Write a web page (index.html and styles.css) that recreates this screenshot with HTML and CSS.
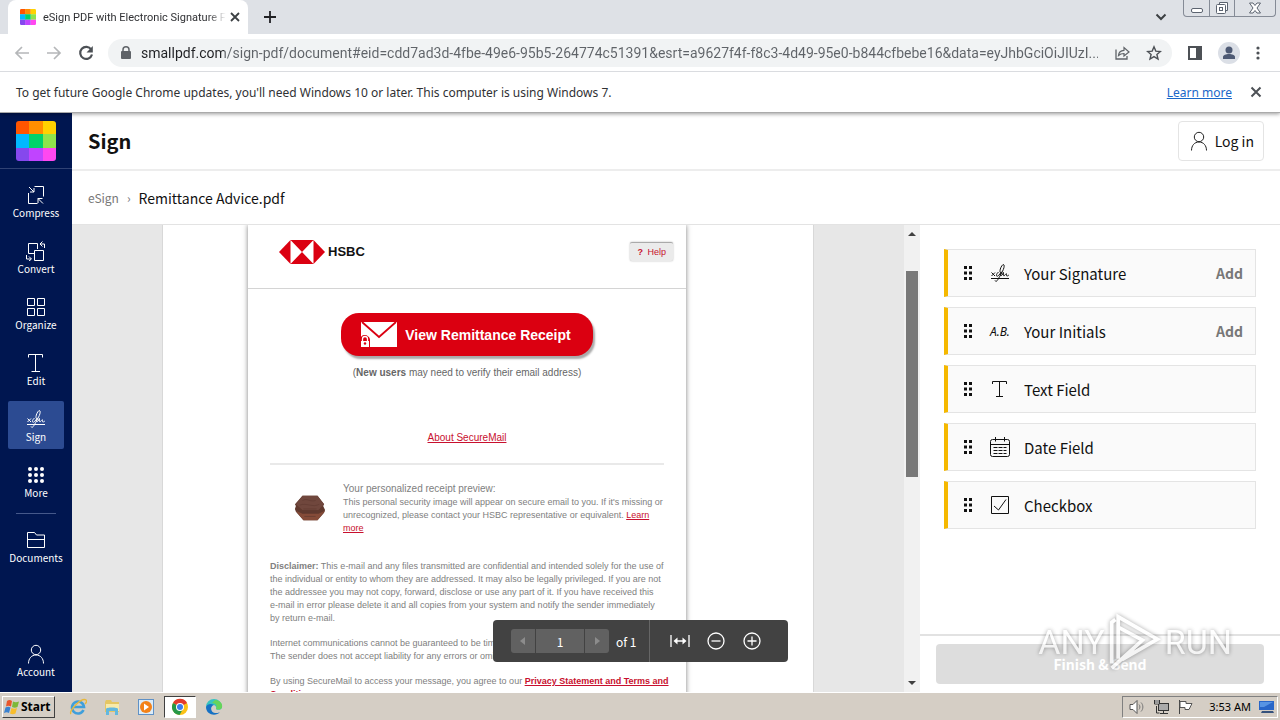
FILE: index.html
```html
<!DOCTYPE html>
<html lang="en">
<head>
  <meta charset="UTF-8" />
  <meta name="viewport" content="width=device-width, initial-scale=1" />
  <title>eSign PDF with Electronic Signature</title>
  <link rel="stylesheet" href="styles.css">
</head>
<body>
  <header class="browser">
    <div class="tab-strip">
      <div class="tab">
        <svg class="favicon" width="16" height="16" viewBox="0 0 40 40"><use href="#logo" /></svg>
        <span class="tab-title">eSign PDF with Electronic Signature F</span>
        <button class="icon-btn" aria-label="Close tab"><svg width="10" height="10" viewBox="0 0 10 10"><path d="M1 1l8 8M9 1L1 9" stroke="#3c4043" stroke-width="1.8" /></svg></button>
      </div>
      <button class="icon-btn new-tab" aria-label="New tab"><svg width="12" height="12" viewBox="0 0 12 12"><path d="M6 0v12M0 6h12" stroke="#202124" stroke-width="1.8" /></svg></button>
      <button class="icon-btn tab-search" aria-label="Search tabs"><svg width="12" height="8" viewBox="0 0 12 8"><path d="M1.5 1.5L6 6l4.500-4.500" fill="none" stroke="#3c4043" stroke-width="2" /></svg></button>
      <div class="window-controls">
        <button aria-label="Minimize"><svg width="14" height="16" viewBox="0 0 14 16"><rect x="1.500" y="8.500" width="11" height="4" rx="1.500" fill="#fff" stroke="#5c6470" /></svg></button>
        <button aria-label="Restore"><svg width="14" height="16" viewBox="0 0 14 16"><path d="M4.500 4V2.500h8v8H11" fill="#fff" stroke="#5c6470" /><rect x="1.500" y="4.500" width="9" height="9" rx="1" fill="#fff" stroke="#5c6470" /><rect x="4.500" y="7.500" width="3" height="3" fill="none" stroke="#5c6470" /></svg></button>
        <button class="wide" aria-label="Close"><svg width="14" height="16" viewBox="0 0 14 16"><path d="M1.500 3h3.500l2 2.500L9 3h3.500L9 8l3.500 5H9L7 10.500 5 13H1.500L5 8z" fill="#fff" stroke="#5c6470" /></svg></button>
      </div>
    </div>

    <div class="toolbar">
      <button class="icon-btn" aria-label="Back"><svg width="16" height="16" viewBox="0 0 16 16"><path d="M15 8H2M8 2L2 8l6 6" fill="none" stroke="#b5b7b9" stroke-width="1.700" /></svg></button>
      <button class="icon-btn" aria-label="Forward"><svg width="16" height="16" viewBox="0 0 16 16"><path d="M1 8h13M8 2l6 6-6 6" fill="none" stroke="#b5b7b9" stroke-width="1.700" /></svg></button>
      <button class="icon-btn" aria-label="Reload"><svg width="16" height="16" viewBox="0 0 16 16"><path d="M13.200 4.500A6 6 0 1 0 14 9.500" fill="none" stroke="#4d5156" stroke-width="2.200" /><path d="M14.800 1v6.500H8.500z" fill="#4d5156" /></svg></button>
      <div class="omnibox">
        <svg width="12" height="14" viewBox="0 0 12 14"><rect x="1" y="5" width="10" height="8" rx="1" fill="#5f6368" /><path d="M3 6V3.800a3 3 0 0 1 6 0V6" fill="none" stroke="#5f6368" stroke-width="1.500" /></svg>
        <input class="url" type="text" aria-label="Address" value="smallpdf.com/sign-pdf/document#eid=cdd7ad3d-4fbe-49e6-95b5-264774c51391&amp;esrt=a9627f4f-f8c3-4d49-95e0-b844cfbebe16&amp;data=eyJhbGciOiJIUzI..." />
        <button class="icon-btn" aria-label="Share"><svg width="16" height="16" viewBox="0 0 16 16"><path d="M2 4.500v9.500h11v-3" fill="none" stroke="#5f6368" stroke-width="1.300" /><path d="M4.500 10.500c.3-3.500 2-5 5.500-5.200V2.500L15 7l-5 4V8.500c-2.600 0-4 .5-5.500 2z" fill="none" stroke="#5f6368" stroke-width="1.200" /></svg></button>
        <button class="icon-btn" aria-label="Bookmark"><svg width="16" height="16" viewBox="0 0 16 16"><path d="M8 1.800l1.800 4.300 4.600.4-3.500 3 1.100 4.500L8 11.600 4 14l1.100-4.500-3.500-3 4.600-.4z" fill="none" stroke="#4d5156" stroke-width="1.400" /></svg></button>
      </div>
      <button class="icon-btn" aria-label="Side panel"><svg width="14" height="14" viewBox="0 0 14 14"><path d="M0 0h14v14H0zM2 2v10h6V2z" fill="#4d5156" fill-rule="evenodd" /></svg></button>
      <button class="icon-btn" aria-label="Profile"><svg width="22" height="22" viewBox="0 0 22 22"><circle cx="11" cy="11" r="11" fill="#dbdfe6" /><circle cx="11" cy="8" r="3.500" fill="#4e5a74" /><path d="M5 17v-2c0-2 3-3 6-3s6 1 6 3v2z" fill="#4e5a74" /></svg></button>
      <button class="icon-btn" aria-label="Menu"><svg width="4" height="14" viewBox="0 0 4 14" fill="#4d5156"><circle cx="2" cy="2" r="1.600" /><circle cx="2" cy="7" r="1.600" /><circle cx="2" cy="12" r="1.600" /></svg></button>
    </div>

    <div class="infobar">
      <span>To get future Google Chrome updates, you'll need Windows 10 or later. This computer is using Windows 7.</span>
      <a href="#">Learn more</a>
      <button class="icon-btn" aria-label="Dismiss"><svg width="12" height="12" viewBox="0 0 12 12"><path d="M1.500 1.500l9 9M10.500 1.500l-9 9" stroke="#4d5156" stroke-width="2" /></svg></button>
    </div>
  </header>

  <div class="app">
    <nav class="sidebar">
      <a class="logo" href="#" aria-label="Home">
        <svg width="40" height="40" viewBox="0 0 40 40">
          <clipPath id="round"><rect width="40" height="40" rx="3" /></clipPath>
          <g id="logo" clip-path="url(#round)">
            <path d="M0 0h14v14H0z" fill="#ff5500" /><path d="M13 0h14v14H13z" fill="#ff8e00" /><path d="M27 0h13v14H27z" fill="#ffd200" />
            <path d="M0 13h14v14H0z" fill="#00b8ff" /><path d="M13 13h14v14H13z" fill="#00d26a" /><path d="M27 13h13v14H27z" fill="#8fe44b" />
            <path d="M0 27h14v13H0z" fill="#8548ed" /><path d="M13 27h14v13H13z" fill="#c044ff" /><path d="M27 27h13v13H27z" fill="#ff48f0" />
          </g>
        </svg>
      </a>
      <a class="nav-item" href="#"><svg width="20" height="20" viewBox="0 0 20 20"><path d="M8.500 1.500h9v10M2.500 8v10.500h9M3 2l5 5M8 3v4H4M17 18.500l-5-5M12 18v-4.500h4.500" /></svg>Compress</a>
      <a class="nav-item" href="#"><svg width="20" height="20" viewBox="0 0 20 20"><path d="M8 12.500H2.500v-10h9V8M8.500 9.500h9v10h-9zM14 3h4.500v4M16.500.5L14 3l2.500 2.500M.5 14v4H5M3 15.500L5.500 18 3 20" /></svg>Convert</a>
      <a class="nav-item" href="#"><svg width="20" height="20" viewBox="0 0 20 20"><path d="M1.500 1.500h7v7h-7zM11.500 1.500h7v7h-7zM1.500 11.500h7v7h-7zM11.500 11.500h7v7h-7z" /></svg>Organize</a>
      <a class="nav-item" href="#"><svg width="20" height="20" viewBox="0 0 20 20"><path d="M2.500 4.500v-3h14v3M9.500 1.500v17M5.500 18.500h8.500" /></svg>Edit</a>
      <a class="nav-item active" href="#"><svg width="20" height="20" viewBox="0 0 20 20"><g id="scribble"><path d="M1 15.500h18M1.500 9.500l3.500 3.500M5 9.500L1.500 13M5 17.500c1 2 2.500 0 3.500-2C11 11 15 5 14 2c-.8-1.800-3.500 2-4 5.500-.3 2.200.7 2.500 2 1.500M8.500 9c-3.500 3-2 6 .5 3l2-2.500c-1.500 4 .5 4.500 2.500 0-.5 3.500.3 4 1.500 2.500s1.500-2 1.500 0 1.500.5 2.500 0" /></g></svg>Sign</a>
      <a class="nav-item" href="#"><svg class="dots" width="20" height="20" viewBox="0 0 20 20"><circle cx="4" cy="4" r="2" /><circle cx="10" cy="4" r="2" /><circle cx="16" cy="4" r="2" /><circle cx="4" cy="10" r="2" /><circle cx="10" cy="10" r="2" /><circle cx="16" cy="10" r="2" /><circle cx="4" cy="16" r="2" /><circle cx="10" cy="16" r="2" /><circle cx="16" cy="16" r="2" /></svg>More</a>
      <hr class="nav-line" />
      <a class="nav-item" href="#"><svg width="20" height="20" viewBox="0 0 20 20"><path d="M1.500 17.500v-15h7l2 2.500h8v12.500zM1.500 9.500h17" /></svg>Documents</a>
      <a class="nav-item account" href="#"><svg width="20" height="20" viewBox="0 0 20 20"><circle cx="10" cy="6" r="4.700" /><path d="M2.500 19.500c0-5 3-8.500 7.500-8.500s7.500 3.500 7.500 8.500" /></svg>Account</a>
    </nav>

    <main class="main">
      <div class="top">
        <h1>Sign</h1>
        <button class="login"><svg width="20" height="20" viewBox="0 0 20 20"><circle cx="10" cy="6" r="4.700" /><path d="M2.500 19.500c0-5 3-8.500 7.500-8.500s7.500 3.500 7.500 8.500" /></svg>Log in</button>
      </div>
      <div class="crumbs"><a href="#">eSign</a><span class="sep">›</span><span>Remittance Advice.pdf</span></div>

      <div class="workspace">
        <section class="viewer">
          <div class="page">
            <article class="mail">
              <div class="mail-head">
                <svg width="46" height="24" viewBox="0 0 46 24"><path d="M11.500 0h23L46 12 34.500 24h-23L0 12z" fill="#db0011" /><path d="M11.500 0L23 12 11.500 24zM34.500 0v24L23 12z" fill="#fff" /></svg>
                <strong>HSBC</strong>
                <button class="help"><b>?</b> Help</button>
              </div>
              <div class="mail-body">
                <button class="receipt">
                  <svg width="37" height="27" viewBox="0 0 37 27"><rect x="1" y="1" width="36" height="25" fill="#fff" /><path d="M2 1l17 15L36 1" fill="none" stroke="#db0011" stroke-width="1.800" /><path d="M0 27V19c0-3 2-5 4.500-5S10 16 10 19v8z" fill="#db0011" /><path d="M1 26v-6h8v6z" fill="#fff" /><path d="M2.500 20v-2a2.500 2.500 0 0 1 5 0v2" fill="none" stroke="#fff" stroke-width="1.300" /><circle cx="5" cy="22.500" r="1.200" fill="#db0011" /></svg>
                  View Remittance Receipt
                </button>
                <p class="note">(<b>New users</b> may need to verify their email address)</p>
                <p class="about"><a href="#">About SecureMail</a></p>
                <div class="preview">
                  <svg width="32" height="28" viewBox="0 0 34 28"><path d="M9 1h16l7 9-1 2 2 4-1 3-7 8H10l-8-9-1-3 1-3-1-2z" fill="#60392e" /><path d="M9 1h16l7 9-6 6H9l-7-6z" fill="#70473d" /><path d="M2 17l7 3h17l7-3-8 10H10z" fill="#854b38" /><path d="M9 6c5-3 8 2 14 0M6 11c7-3 14 3 21-1M10 15h14M9 19l15-1M11 23h12" fill="none" stroke="#5c382f" stroke-width=".6" /></svg>
                  <div class="small">
                    <h2>Your personalized receipt preview:</h2>
                    <p>This personal security image will appear on secure email to you. If it's missing or<br>unrecognized, please contact your HSBC representative or equivalent. <a href="#">Learn<br>more</a></p>
                  </div>
                </div>
                <div class="small legal">
                  <p><b>Disclaimer:</b> This e-mail and any files transmitted are confidential and intended solely for the use of<br>the individual or entity to whom they are addressed. It may also be legally privileged. If you are not<br>the addressee you may not copy, forward, disclose or use any part of it. If you have received this<br>e-mail in error please delete it and all copies from your system and notify the sender immediately<br>by return e-mail.</p>
                  <p>Internet communications cannot be guaranteed to be timely,<br>The sender does not accept liability for any errors or omissions.</p>
                  <p>By using SecureMail to access your message, you agree to our <a class="terms" href="#">Privacy Statement and Terms and<br>Conditions</a></p>
                </div>
              </div>
            </article>
          </div>
          <div class="scrollbar">
            <svg width="8" height="4" viewBox="0 0 8 4"><path d="M0 4l4-4 4 4z" fill="#404040" /></svg>
            <div class="thumb"></div>
            <svg width="8" height="4" viewBox="0 0 8 4"><path d="M0 0h8L4 4z" fill="#404040" /></svg>
          </div>
          <div class="pager">
            <div class="pager-nav">
              <button aria-label="Previous page"><svg width="6" height="8" viewBox="0 0 6 8"><path d="M5 0v8L0 4z" fill="#8c8c8c" /></svg></button>
              <input type="text" aria-label="Page" value="1" />
              <button aria-label="Next page"><svg width="6" height="8" viewBox="0 0 6 8"><path d="M1 0l5 4-5 4z" fill="#8c8c8c" /></svg></button>
            </div>
            <span class="total">of 1</span>
            <div class="zoom">
              <button aria-label="Fit width"><svg width="20" height="20" viewBox="0 0 20 20"><path d="M1 4v12M19 4v12M5 10h10" /><path d="M3.500 10l4-3.500v7zM16.500 10l-4-3.500v7z" fill="#fff" stroke="none" /></svg></button>
              <button aria-label="Zoom out"><svg width="20" height="20" viewBox="0 0 20 20"><circle cx="10" cy="10" r="8" /><path d="M5.500 10h9" /></svg></button>
              <button aria-label="Zoom in"><svg width="20" height="20" viewBox="0 0 20 20"><circle cx="10" cy="10" r="8" /><path d="M5.500 10h9M10 5.500v9" /></svg></button>
            </div>
          </div>
        </section>

        <aside class="panel">
          <div class="fields">
            <div class="field">
              <svg class="grip" width="10" height="14" viewBox="0 0 10 14"><path id="grip" d="M1 0h3v3H1zM6 0h3v3H6zM1 5.500h3v3H1zM6 5.500h3v3H6zM1 11h3v3H1zM6 11h3v3H6z" /></svg>
              <svg width="20" height="20" viewBox="0 0 20 20"><use href="#scribble" /></svg>
              <span>Your Signature</span><button>Add</button>
            </div>
            <div class="field">
              <svg class="grip" width="10" height="14" viewBox="0 0 10 14"><use href="#grip" /></svg>
              <span class="initials" aria-hidden="true">A.B.</span>
              <span>Your Initials</span><button>Add</button>
            </div>
            <div class="field">
              <svg class="grip" width="10" height="14" viewBox="0 0 10 14"><use href="#grip" /></svg>
              <svg width="20" height="20" viewBox="0 0 20 20"><path d="M2.500 5V2.500h14V5M9.500 2.500v15M6 17.500h7" /></svg>
              <span>Text Field</span>
            </div>
            <div class="field">
              <svg class="grip" width="10" height="14" viewBox="0 0 10 14"><use href="#grip" /></svg>
              <svg width="20" height="20" viewBox="0 0 20 20"><rect x=".5" y="2.500" width="19" height="17" rx="2" /><path d="M.5 7.500h19M5.500 0v4.500M14.500 0v4.500" /><path d="M3.500 10.500h13M3.500 13.500h13M3.500 16.500h13" stroke-dasharray="4 1" /></svg>
              <span>Date Field</span>
            </div>
            <div class="field">
              <svg class="grip" width="10" height="14" viewBox="0 0 10 14"><use href="#grip" /></svg>
              <svg width="20" height="20" viewBox="0 0 20 20"><path d="M1.500 1.500h17v17h-17zM4 11l4.500 4L16 4.500" /></svg>
              <span>Checkbox</span>
            </div>
          </div>
          <div class="finish">
            <button>Finish &amp; Send</button>
            <div class="watermark">
              <span>ANY</span>
              <svg width="56" height="64" viewBox="0 0 60 64"><path d="M12 50V5l42 24-38 22M5 55V11l4-3M12 16l26 14L5 60" fill="none" stroke="#fff" stroke-width="4" /></svg>
              <span>RUN</span>
            </div>
          </div>
        </aside>
      </div>
    </main>
  </div>

  <footer class="taskbar">
    <button class="start"><svg width="16" height="16" viewBox="0 0 16 16"><path d="M3 2c2-1.500 3.500-1 5 0L7 7.500c-2-1-3.500-1-5 0z" fill="#e9562c" /><path d="M9 2.500c2 1 3.500 1 6 0l-1.500 5.500c-2 1-3.500.8-5.500 0z" fill="#7db83a" /><path d="M1.500 8.500c2-1 3.500-1 5 0L5 14c-1.500-1-3-1-5 0z" fill="#3b82d0" /><path d="M7.500 9c2 1 3.500 1 5.500 0l-1.500 5.500c-2 1-3.500 1-5.500 0z" fill="#f8bd2c" /></svg>Start</button>
    <button class="task" aria-label="Internet Explorer"><svg width="18" height="18" viewBox="0 0 18 18"><path d="M14.500 12a6 6 0 1 1 .5-3H5" fill="none" stroke="#3f9fdb" stroke-width="2.600" /><path d="M2 16C-1 13 13-1 17 2c1 1 0 3-1 4" fill="none" stroke="#e8b83a" stroke-width="1.400" /></svg></button>
    <button class="task" aria-label="Explorer"><svg width="18" height="18" viewBox="0 0 18 18"><path d="M2 4l1-2h5l1 2h7v10H2z" fill="#e5c664" /><path d="M3 6h13v7H3z" fill="#f8eaaa" /><path d="M3 17v-6c0-2 12-2 12 0v6h-3v-4H6v4z" fill="#63b8df" /></svg></button>
    <button class="task" aria-label="Media Player"><svg width="18" height="18" viewBox="0 0 18 18"><rect x="1.500" y="1.500" width="15" height="15" fill="#dcecf8" stroke="#5f91c6" /><circle cx="9" cy="9" r="6" fill="#f38218" /><path d="M7 5.500l5 3.500-5 3.500z" fill="#fff" /></svg></button>
    <button class="task current" aria-label="Chrome"><svg width="18" height="18" viewBox="0 0 18 18"><circle cx="9" cy="9" r="8" fill="#fbc116" /><path d="M9 9L2 5a8 8 0 0 1 14 0z" fill="#e33b2e" /><path d="M9 9L2 5a8 8 0 0 0 6.500 12L12 11z" fill="#269847" /><circle cx="9" cy="9" r="4" fill="#fff" /><circle cx="9" cy="9" r="3" fill="#3b7ded" /></svg></button>
    <button class="task" aria-label="Edge"><svg width="18" height="18" viewBox="0 0 18 18"><path d="M1 9a8 8 0 0 1 16 0c0 3-5 3.500-6 2 1-2-1-4-3-4S4 8 1 9z" fill="#37c3c0" /><path d="M10 2c5 0 8 4 7 7.500-1 2.500-5 2.500-6 1.500 1-2 1-6-4-6z" fill="#66d45a" /><path d="M1 9c1-3 5-4 8-2-4 1-4 7 1 8 3 .5 5-1 5-1-4 5-14 3-14-5z" fill="#1671c4" /></svg></button>
    <div class="tray">
      <svg width="16" height="16" viewBox="0 0 16 16"><path d="M1 5.500h3l4-4v13l-4-4H1z" fill="#fff" stroke="#555" /><path d="M10 5.500c1.200 1.500 1.200 3.500 0 5M12 3.500c2.500 2.500 2.500 6.500 0 9" fill="none" stroke="#777" /></svg>
      <svg width="16" height="16" viewBox="0 0 16 16"><rect x="5.500" y="4.500" width="10" height="7" fill="#aaa" stroke="#333" /><path d="M7 14.500h8M10.500 12v2M3.500 7v7h3" fill="none" stroke="#333" /><path d="M1.500 1v4h5V1M3 1v3M5 1v3" fill="#fff" stroke="#333" /></svg>
      <svg width="16" height="16" viewBox="0 0 16 16"><path d="M2.500 1v14" stroke="#444" /><path d="M3 2.500h6v2h6l-3 6H8v-2H3z" fill="#fff" stroke="#555" /></svg>
      <time>3:53 AM</time>
      <svg width="16" height="16" viewBox="0 0 16 16"><path d="M0 2h15v9H0z" fill="#2866c8" /><path d="M1 3h13L5 8H1z" fill="#5794e3" /><path d="M3 12h11l1 2H2z" fill="#35517c" /></svg>
    </div>
  </footer>
</body>
</html>
```
FILE: styles.css
```css
* { margin: 0; padding: 0; box-sizing: border-box; }
body {
  height: 100vh;
  display: flex;
  flex-direction: column;
  overflow: hidden;
  background: #fff;
  color: #111;
  font-family: "Noto Sans CJK SC", "Noto Sans", sans-serif;
}
button, input { font: inherit; color: inherit; border: none; background: none; }
button { cursor: pointer; }
svg { display: block; flex: none; }

/* browser window */
.browser {
  position: relative;
  z-index: 2;
  font-family: "Noto Sans", sans-serif;
  color: #303134;
  border-bottom: 1px solid #aaa;
  box-shadow: 0 1px 4px rgba(0, 0, 0, 0.4);
}
.icon-btn { display: flex; align-items: center; justify-content: center; }
.tab-strip {
  display: flex;
  align-items: center;
  height: 34px;
  padding-left: 8px;
  background: #dee1e6;
}
.tab {
  display: flex;
  align-items: center;
  width: 240px;
  height: 34px;
  padding: 0 11px 0 12px;
  background: #fff;
  border-radius: 8px 8px 0 0;
}
.tab-title {
  flex: 1;
  margin: 0 4px 0 7px;
  font-family: Roboto, sans-serif;
  font-size: 11px;
  white-space: nowrap;
  mask-image: linear-gradient(to right, #000 90%, transparent);
}
.new-tab { margin-left: 16px; }
.tab-search { margin-left: auto; }
.window-controls {
  display: flex;
  align-self: flex-start;
  margin: 0 4px 0 16px;
  border: 1px solid #858b96;
  border-top: none;
  border-radius: 0 0 4px 4px;
}
.window-controls button {
  display: flex;
  justify-content: center;
  width: 25px;
  height: 16px;
}
.window-controls button + button { border-left: 1px solid #858b96; }
.window-controls .wide { width: 41px; }
.toolbar {
  display: flex;
  align-items: center;
  gap: 16px;
  height: 38px;
  padding: 0 20px 0 14px;
  border-bottom: 1px solid #dadce0;
}
.omnibox {
  flex: 1;
  display: flex;
  align-items: center;
  gap: 16px;
  height: 28px;
  margin-left: -2px;
  padding: 0 10px 0 12px;
  border-radius: 14px;
  background: #f1f3f4;
}
.url {
  flex: 1;
  min-width: 0;
  margin-left: -7px;
  font-family: Roboto, sans-serif;
  font-size: 14px;
  background: linear-gradient(to right, #202124 83px, #5f6368 83px);
  background-clip: text;
  color: transparent;
}
.infobar {
  display: flex;
  align-items: center;
  gap: 18px;
  height: 40px;
  padding: 0 18px 0 16px;
  font-size: 12px;
}
.infobar a { margin-left: auto; color: #1a67c9; }

/* application */
.app { flex: 1; display: flex; min-height: 0; }
.sidebar {
  display: flex;
  flex-direction: column;
  align-items: center;
  gap: 8px;
  width: 72px;
  padding-bottom: 8px;
  background: #001650;
  color: #fff;
}
.logo {
  display: flex;
  justify-content: center;
  width: 100%;
  padding: 8px 0 7px;
  border-bottom: 1px solid #304274;
}
.nav-item {
  display: flex;
  flex-direction: column;
  align-items: center;
  width: 56px;
  height: 48px;
  padding-top: 8px;
  border-radius: 2px;
  color: #fff;
  font-size: 10px;
  line-height: 16px;
  text-decoration: none;
}
.nav-item svg { fill: none; stroke: #fff; }
.nav-item .dots { fill: #fff; stroke: none; }
.active { background: #2c4b92; }
.nav-line { width: 40px; border: none; border-top: 1px solid #45588a; }
.account { margin-top: auto; }
.main { flex: 1; display: flex; flex-direction: column; min-width: 0; }
.top {
  display: flex;
  align-items: center;
  justify-content: space-between;
  height: 58px;
  padding: 0 16px;
  border-bottom: 2px solid #ededed;
}
h1 { font-size: 20px; line-height: 24px; }
.login {
  display: flex;
  align-items: center;
  gap: 6px;
  height: 40px;
  padding: 0 9px 0 10px;
  border: 1px solid #e4e4e4;
  border-radius: 4px;
  font-size: 14px;
}
.login svg { fill: none; stroke: #222; }
.crumbs {
  display: flex;
  align-items: center;
  gap: 8px;
  height: 54px;
  padding-left: 16px;
  border-bottom: 1px solid #e3e3e3;
  font-size: 14px;
}
.crumbs a { color: #777; font-size: 12px; text-decoration: none; }
.sep { color: #777; font-size: 12px; }
.workspace { flex: 1; display: flex; min-height: 0; }

/* document */
.viewer {
  position: relative;
  flex: 1;
  display: flex;
  min-width: 0;
  overflow: hidden;
  background: #e7e7e7;
}
.page {
  width: 652px;
  margin: 0 auto;
  padding: 0 127px 0 85px;
  background: #fff;
  border: 1px solid #d8d8d8;
  border-width: 0 1px;
  font-family: "Liberation Sans", Arial, sans-serif;
  color: #666;
}
.mail {
  min-height: 100%;
  box-shadow: 0 0 5px rgba(0, 0, 0, 0.5);
}
.mail a { color: #c8102e; }
.mail-head {
  display: flex;
  align-items: center;
  gap: 3px;
  height: 64px;
  padding: 0 13px 10px 31px;
  border-bottom: 1px solid #d4d4d4;
}
.mail-head strong { color: #111; font-size: 13px; }
.help {
  margin-left: auto;
  padding: 0 7px;
  border-top: 1px solid #aaa;
  border-radius: 2px;
  background: #ebebeb;
  box-shadow: 0 0 2px rgba(0, 0, 0, 0.3);
  color: #c8102e;
  font-size: 9px;
  line-height: 18px;
}
.help b { margin-right: 2px; }
.mail-body { padding: 24px 22px 0; }
.receipt {
  display: flex;
  align-items: center;
  gap: 8px;
  height: 43px;
  margin: 0 auto;
  padding: 0 22px 0 19px;
  border-radius: 18px;
  background: #db0011;
  box-shadow: 2px 3px 2px #aaa;
  color: #fff;
  font-size: 14px;
  font-weight: bold;
}
.note { margin-top: 8px; font-size: 10px; line-height: 18px; text-align: center; }
.about {
  margin-top: 48px;
  padding-bottom: 17px;
  border-bottom: 2px solid #e9e9e9;
  font-size: 10px;
  line-height: 16px;
  text-align: center;
}
.preview { display: flex; align-items: center; gap: 17px; padding: 16px 0 0 24px; }
h2 { font-size: 10px; font-weight: normal; line-height: 15px; }
.small { color: #808080; font-size: 9px; line-height: 13px; white-space: nowrap; }
.legal { margin-top: 25px; }
.legal p { margin-bottom: 12px; }
.terms { font-weight: bold; }
.scrollbar {
  display: flex;
  flex-direction: column;
  align-items: center;
  width: 16px;
  padding: 7px 0;
  background: #f1f1f1;
}
.thumb { width: 12px; height: 206px; margin: 35px 0 auto; background: #787878; }
.pager {
  position: absolute;
  left: 421px;
  bottom: 30px;
  display: flex;
  align-items: center;
  width: 295px;
  height: 42px;
  padding-left: 18px;
  border-radius: 4px;
  background: #424242;
  color: #fff;
  font-size: 12px;
}
.pager-nav { display: flex; gap: 1px; height: 24px; }
.pager-nav button { width: 24px; background: #616161; border-radius: 3px 0 0 3px; }
.pager-nav button:last-child { border-radius: 0 3px 3px 0; }
.pager-nav svg { margin: 0 auto; }
.pager-nav input { width: 48px; background: #616161; text-align: center; }
.total { margin: 0 12px 0 7px; }
.zoom { display: flex; align-items: center; gap: 16px; height: 42px; padding-left: 20px; border-left: 1px solid #666; }
.zoom svg { fill: none; stroke: #fff; stroke-width: 1.300; }

/* fields */
.panel { display: flex; flex-direction: column; width: 360px; }
.fields { flex: 1; display: flex; flex-direction: column; gap: 10px; padding: 24px; }
.field {
  display: flex;
  align-items: center;
  gap: 14px;
  height: 48px;
  padding: 0 12px 0 15px;
  background: #fafafa;
  border: 1px solid #e4e4e4;
  border-left: 4px solid #f5b800;
  font-size: 15px;
}
.field svg { fill: none; stroke: #111; }
.field .grip { margin-right: 3px; fill: #111; stroke: none; }
.field button { margin-left: auto; color: #777; font-size: 14px; font-weight: bold; }
.initials { width: 20px; font-family: "Noto Sans", sans-serif; font-size: 12px; font-style: italic; }
.finish { position: relative; padding: 8px 16px; border-top: 2px solid #e2e2e2; }
.finish > button {
  width: 100%;
  height: 40px;
  border-radius: 4px;
  background: #ddd;
  color: #fff;
  font-size: 14px;
  font-weight: bold;
}
.watermark {
  position: absolute;
  right: 48px;
  bottom: 18px;
  display: flex;
  align-items: center;
  gap: 2px;
  color: #fff;
  font: 34px Roboto, sans-serif;
  filter: drop-shadow(0 0 2px rgba(0, 0, 0, 0.5));
  opacity: 0.7;
  pointer-events: none;
}

/* taskbar */
.taskbar {
  display: flex;
  align-items: center;
  height: 28px;
  padding: 0 2px;
  border-top: 1px solid #fff;
  background: #d5cec5;
  color: #000;
  font-family: "Noto Sans", sans-serif;
}
.start {
  display: flex;
  align-items: center;
  gap: 1px;
  height: 22px;
  margin-right: 7px;
  padding: 0 3px 0 1px;
  border: 1px solid;
  border-color: #fff #404040 #404040 #fff;
  font-size: 12px;
  font-weight: bold;
}
.task { display: flex; align-items: center; justify-content: center; width: 32px; height: 22px; margin-right: 2px; }
.current { background: #fff; border: 1px solid; border-color: #404040 #fff #fff #404040; }
.tray {
  display: flex;
  align-items: center;
  gap: 8px;
  height: 22px;
  margin-left: auto;
  padding: 0 2px 0 6px;
  border: 1px solid;
  border-color: #808080 #fff #fff #808080;
}
.tray time { margin-left: 8px; font-size: 11px; }
```
